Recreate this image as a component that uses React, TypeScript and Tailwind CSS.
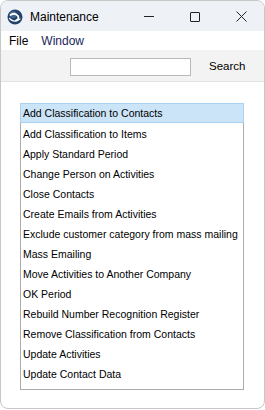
import React from 'react';

const items = [
  'Add Classification to Contacts',
  'Add Classification to Items',
  'Apply Standard Period',
  'Change Person on Activities',
  'Close Contacts',
  'Create Emails from Activities',
  'Exclude customer category from mass mailing',
  'Mass Emailing',
  'Move Activities to Another Company',
  'OK Period',
  'Rebuild Number Recognition Register',
  'Remove Classification from Contacts',
  'Update Activities',
  'Update Contact Data',
];

const Logo = () => (
  <svg width="16" height="16" viewBox="0 0 16 16">
    <circle cx="8" cy="8" r="7.5" fill="#23436a" />
    <circle cx="6" cy="5.5" r="3.5" fill="#4f75a0" opacity="0.7" />
    <path d="M3.5 6 Q 8 3 11 7 Q 12.5 10 9 11.5" stroke="#fff" strokeWidth="1.8" fill="none" strokeLinecap="round" />
    <path d="M2.5 9.5 Q 7 14.5 13 10" stroke="#fff" strokeWidth="1.2" fill="none" strokeLinecap="round" />
  </svg>
);

const sans = { fontFamily: '"Liberation Sans", Arial, sans-serif' };

export default function App() {
  return (
    <div className="w-[265px] h-[410px] bg-white" style={sans}>
      <div className="w-[265px] h-[409px] border border-[#c7c7c7] rounded-[8px] overflow-hidden flex flex-col bg-white">
        <div className="h-[30px] bg-[#eef2f7] flex items-center pl-[6px] pt-[1px] shrink-0">
          <Logo />
          <span className="ml-[7px] text-[12px] text-black">Maintenance</span>
          <div className="ml-auto flex items-center">
            <div className="w-[46px] h-[30px] flex items-center justify-center">
              <div className="w-[10px] h-px bg-[#222]" />
            </div>
            <div className="w-[46px] h-[30px] flex items-center justify-center">
              <div className="w-[10px] h-[10px] border border-[#222] rounded-[1px]" />
            </div>
            <div className="w-[46px] h-[30px] flex items-center justify-center">
              <svg width="11" height="11" viewBox="0 0 11 11">
                <path d="M0.5 0.5 L10.5 10.5 M10.5 0.5 L0.5 10.5" stroke="#222" strokeWidth="1" />
              </svg>
            </div>
          </div>
        </div>
        <div className="h-[19px] bg-white flex items-center text-[12px] pl-[8px] gap-[13px] shrink-0">
          <span className="text-black">File</span>
          <span className="text-[#1a1f5c]">Window</span>
        </div>
        <div className="h-[32px] bg-[#f3f3f3] border-b border-[#e2e2e2] flex items-center pt-[3px] shrink-0">
          <div className="ml-[69px] w-[121px] h-[18px] bg-white border border-[#b9b9b9]" />
          <span className="ml-[18px] text-[11.5px] text-black">Search</span>
        </div>
        <div className="flex-1 pt-[21px] pl-[19px]">
          <div className="w-[224px] h-[287px] border border-[#ababab] bg-white">
            {items.map((t, i) => (
              <div
                key={t}
                className={
                  i === 0
                    ? 'h-[20px] flex items-center pl-[2px] pt-px bg-[#cce4f7] border border-[#a9d1f2] -mx-px -mt-px mb-px'
                    : 'h-[20px] flex items-center pl-[2px] pt-px'
                }
              >
                <span className="text-[10.5px] text-black whitespace-nowrap">{t}</span>
              </div>
            ))}
          </div>
        </div>
      </div>
    </div>
  );
}
